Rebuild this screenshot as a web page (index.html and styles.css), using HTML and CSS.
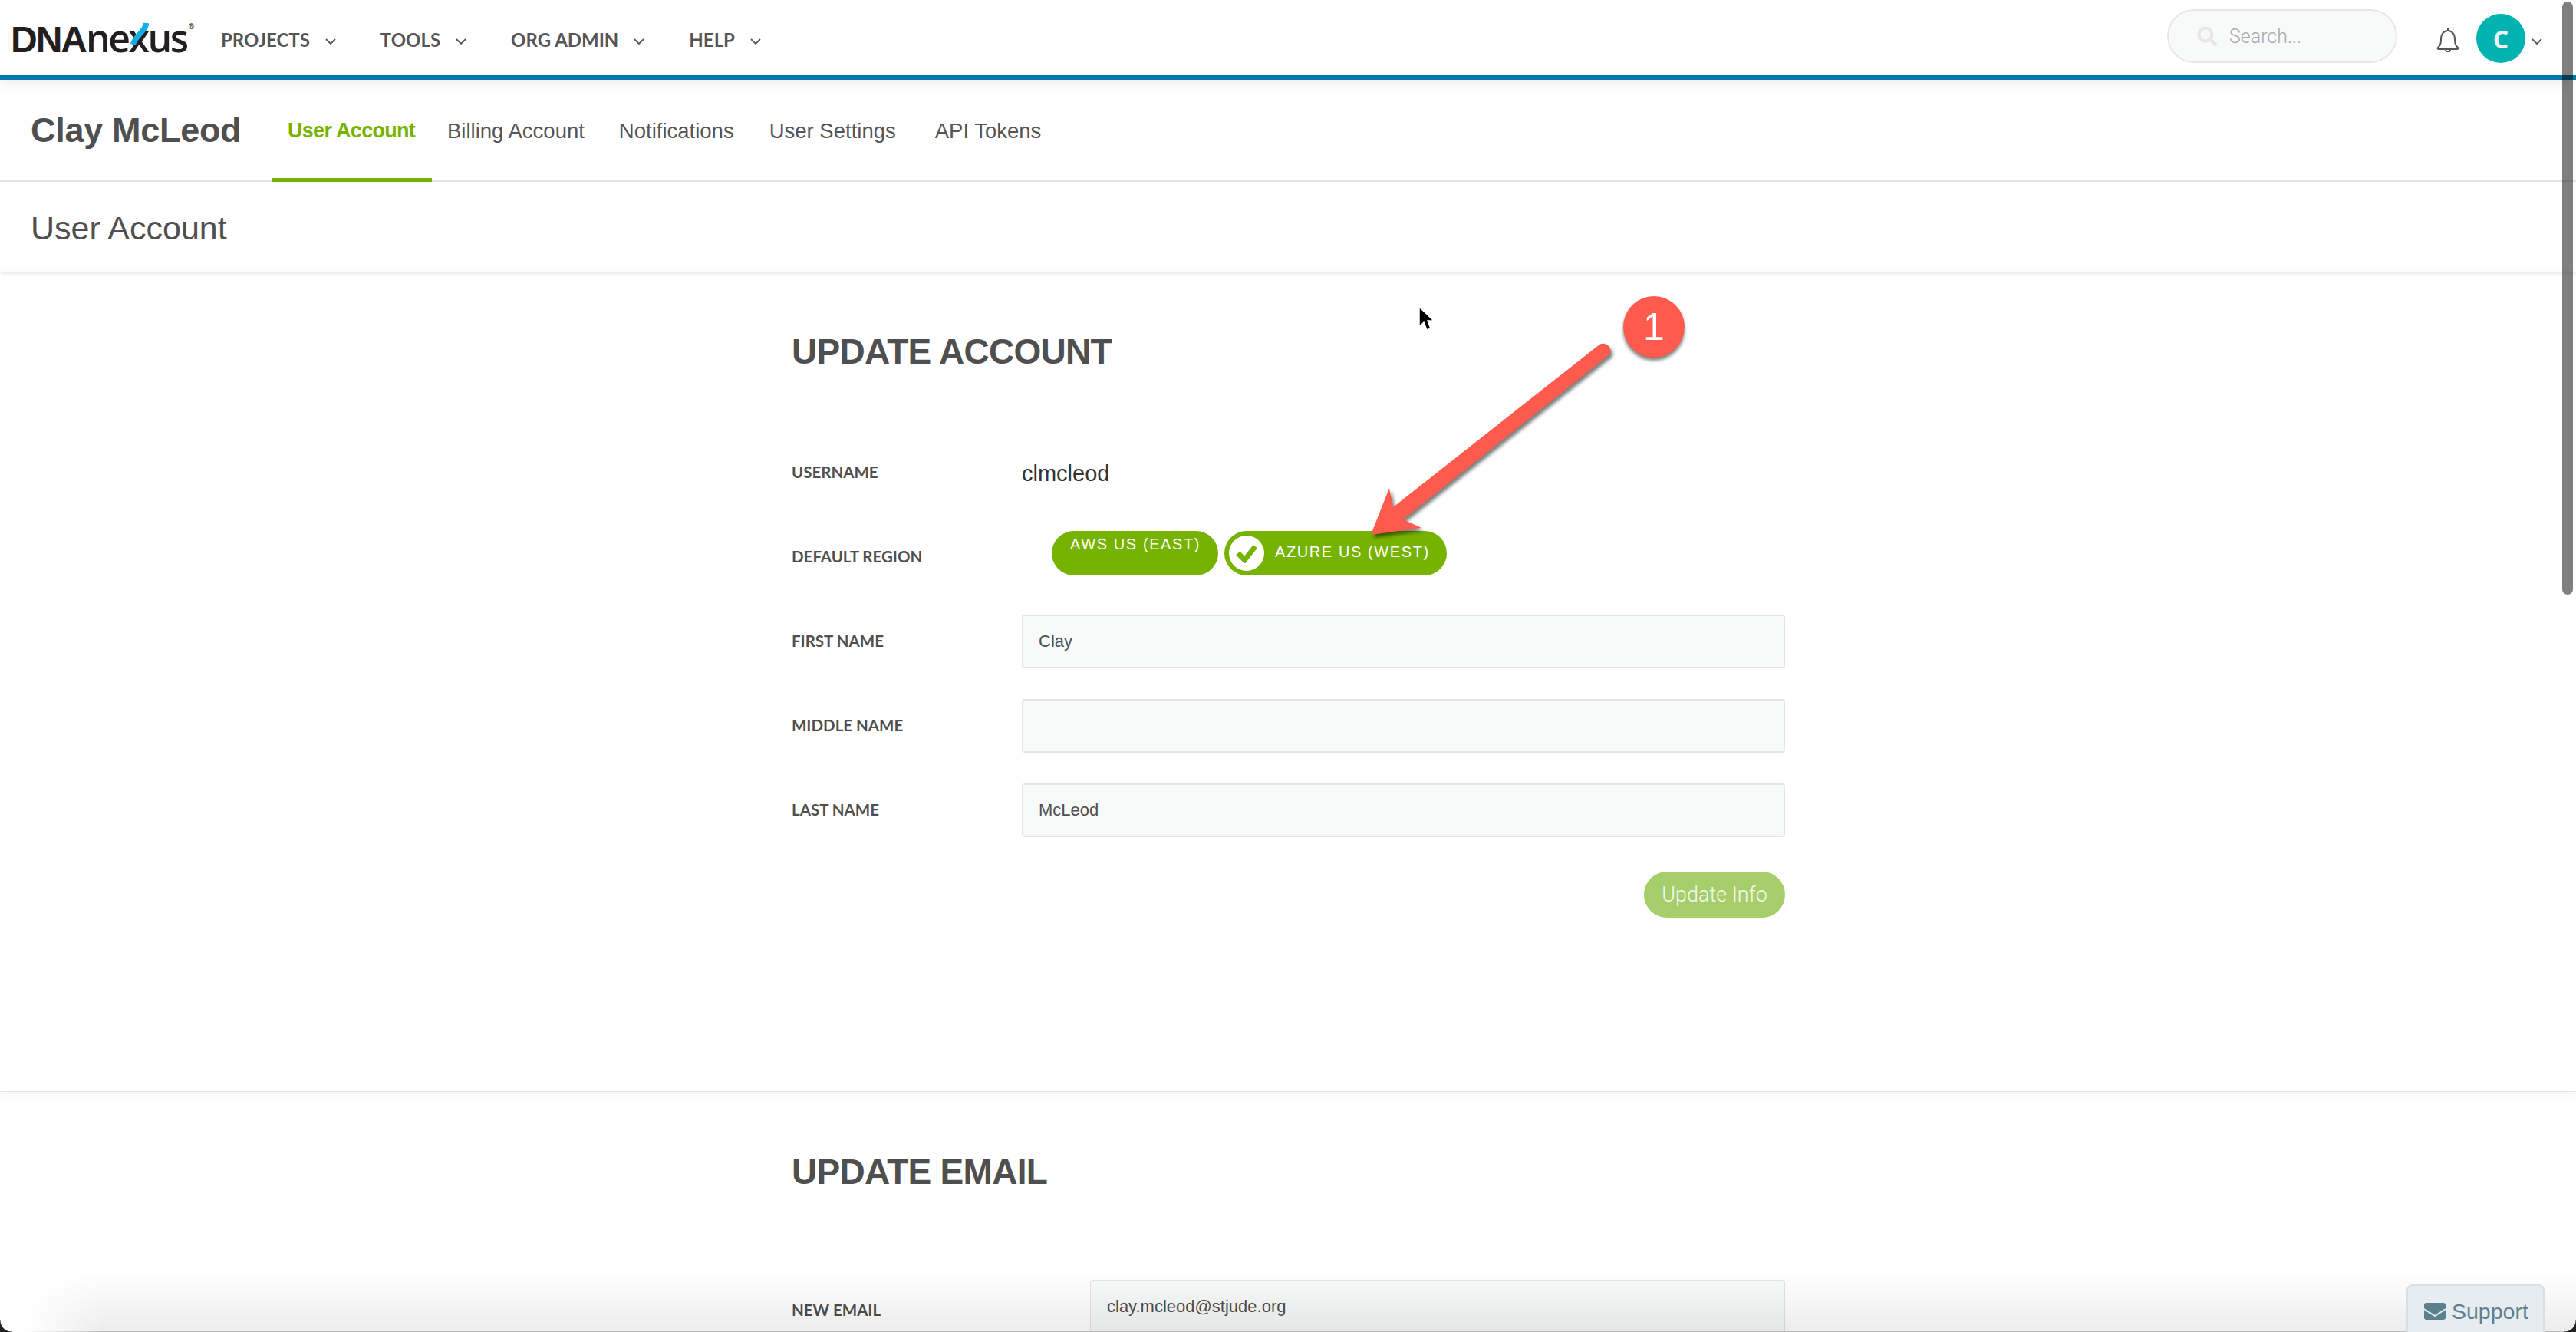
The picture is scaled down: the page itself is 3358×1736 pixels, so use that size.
FILE: index.html
```html
<!DOCTYPE html>
<html>
  <head>
    <meta name="viewport" content="width=device-width, initial-scale=1" />
    <title>User Account</title>
    <link rel="stylesheet" href="styles.css">
  </head>
  <body>
    <header class="topbar">
      <a class="logo">
        <span class="logo-dna">DNA</span><span class="logo-nexus">nexus</span><sup class="logo-reg">®</sup>
        <svg class="logo-strand" viewBox="0 0 24 30" preserveAspectRatio="none"><path d="M21 1C20 11 8 17 4 29" /></svg>
      </a>
      <nav class="mainnav">
        <a class="mainnav-item">PROJECTS<svg class="chev" viewBox="0 0 14 8"><path d="M1 1l6 6 6-6" /></svg></a>
        <a class="mainnav-item">TOOLS<svg class="chev" viewBox="0 0 14 8"><path d="M1 1l6 6 6-6" /></svg></a>
        <a class="mainnav-item">ORG ADMIN<svg class="chev" viewBox="0 0 14 8"><path d="M1 1l6 6 6-6" /></svg></a>
        <a class="mainnav-item">HELP<svg class="chev" viewBox="0 0 14 8"><path d="M1 1l6 6 6-6" /></svg></a>
      </nav>
      <div class="search">
        <svg class="search-icon" viewBox="0 0 26 26"><circle cx="11" cy="11" r="8.5" /><path d="M17 17l7 7" /></svg>
        <span class="search-text">Search...</span>
      </div>
      <svg class="bell" viewBox="0 0 30 32"><path d="M15 1v3M2 26c3-3 4-5 4-11 0-7 4-11 9-11s9 4 9 11c0 6 1 8 4 11 1 1 0 2-1 2H3c-1 0-2-1-1-2zM12 28c0 5 6 5 6 0" /></svg>
      <div class="avatar">C</div>
      <svg class="chev chev-user" viewBox="0 0 14 8"><path d="M1 1l6 6 6-6" /></svg>
    </header>

    <div class="subnav">
      <div class="subnav-name">Clay McLeod</div>
      <a class="tab tab-active">User Account</a>
      <a class="tab tab-billing">Billing Account</a>
      <a class="tab tab-notifications">Notifications</a>
      <a class="tab tab-settings">User Settings</a>
      <a class="tab tab-tokens">API Tokens</a>
    </div>

    <div class="pagetitle">User Account</div>

    <section class="section section-account">
      <h2 class="section-title">UPDATE ACCOUNT</h2>
      <div class="row row-first">
        <label class="row-label">USERNAME</label>
        <div class="username">clmcleod</div>
      </div>
      <div class="row">
        <label class="row-label">DEFAULT REGION</label>
        <div class="regions">
          <div class="region region-plain">AWS US (EAST)</div>
          <div class="region region-selected">
            <span class="region-check"><svg viewBox="0 0 24 20"><path d="M3 10l7 7L21 3" /></svg></span>
            AZURE US (WEST)
          </div>
        </div>
      </div>
      <div class="row">
        <label class="row-label">FIRST NAME</label>
        <input class="field" type="text" value="Clay" />
      </div>
      <div class="row">
        <label class="row-label">MIDDLE NAME</label>
        <input class="field" type="text" />
      </div>
      <div class="row">
        <label class="row-label">LAST NAME</label>
        <input class="field" type="text" value="McLeod" />
      </div>
      <div class="actions">
        <button class="update-btn" type="button">Update Info</button>
      </div>
    </section>

    <section class="section section-email">
      <h2 class="section-title">UPDATE EMAIL</h2>
      <div class="row row-email">
        <label class="row-label">NEW EMAIL</label>
        <input class="field field-email" type="text" value="clay.mcleod@stjude.org" />
      </div>
    </section>

    <!-- annotation drawn on top of the screenshot -->
    <svg class="arrow" viewBox="0 0 360 300">
      <path d="M7 277L31 216 36 241 305 29A9.5 9.5 0 0 1 318 42L49 257 73 268z" />
    </svg>
    <div class="marker">1</div>
    <svg class="cursor" viewBox="0 0 22 34"><path d="M2 1v26l6-6 4 10 5-2-4-10h8z" /></svg>

    <div class="bottom-fade"></div>
    <div class="support">
      <svg class="support-icon" viewBox="0 0 28 22"><path class="env-body" d="M3 0h22a3 3 0 0 1 3 3v16a3 3 0 0 1-3 3H3a3 3 0 0 1-3-3V3a3 3 0 0 1 3-3z" /><path class="env-flap" d="M0 8l14 9 14-9" /></svg>
      Support
    </div>
    <div class="scrollbar"></div>
    <div class="corner corner-left"></div>
    <div class="corner corner-right"></div>
  </body>
</html>
```

FILE: styles.css
```css
html,
body {
  margin: 0;
  height: 1736px;
  overflow: hidden;
  background: #fff;
  color: #4f4f4f;
  font-family: "Liberation Sans", Arial, sans-serif;
}

/* Top bar */
.topbar {
  display: flex;
  align-items: center;
  height: 98px;
  border-bottom: 6px solid #0078a8;
  box-shadow: 0 5px 14px rgba(0, 0, 0, 0.07);
  position: relative;
}

.logo {
  position: relative;
  display: flex;
  align-items: baseline;
  width: 288px;
  padding-left: 14px;
  box-sizing: border-box;
  color: #231f20;
  font-family: "Liberation Sans", Arial, sans-serif;
}

.logo-dna {
  font-size: 48px;
  font-weight: 700;
  letter-spacing: -2px;
}

.logo-nexus {
  font-family: "Open Sans", sans-serif;
  font-size: 50px;
  font-weight: 600;
  letter-spacing: -2.5px;
}

.logo-reg {
  font-size: 10px;
  align-self: flex-start;
  margin: 14px 0 0 2px;
}

.logo-strand {
  position: absolute;
  left: 169px;
  top: 14px;
  width: 25px;
  height: 30px;
}

.logo-strand path {
  fill: none;
  stroke: #14aee5;
  stroke-width: 7;
}

.mainnav {
  display: flex;
  margin-top: 4px;
  font-family: Lato, sans-serif;
  font-size: 24px;
  font-weight: 700;
  color: #555;
}

.mainnav-item {
  display: flex;
  align-items: center;
  margin-right: 58px;
}

.chev {
  width: 14px;
  height: 8px;
  margin-left: 20px;
  margin-top: 6px;
}

.chev path {
  fill: none;
  stroke: #555;
  stroke-width: 1.8;
}

.search {
  display: flex;
  align-items: center;
  box-sizing: border-box;
  width: 300px;
  height: 70px;
  margin-left: auto;
  margin-top: -4px;
  padding-left: 37px;
  background: #f8f9f9;
  border: 2px solid #e6e6e6;
  border-radius: 35px;
}

.search-icon {
  width: 26px;
  height: 26px;
}

.search-icon circle,
.search-icon path {
  fill: none;
  stroke: #e6e6e6;
  stroke-width: 4;
  stroke-linecap: round;
}

.search-text {
  margin-left: 16px;
  color: #aaa;
  font-family: Roboto, sans-serif;
  font-size: 25px;
  font-weight: 300;
}

.bell {
  width: 30px;
  height: 32px;
  margin-left: 51px;
  margin-top: 6px;
}

.bell path {
  fill: none;
  stroke: #555;
  stroke-width: 2;
}

.avatar {
  display: flex;
  align-items: center;
  justify-content: center;
  width: 64px;
  height: 64px;
  margin-left: 22px;
  margin-top: 2px;
  border-radius: 50%;
  background: #00b3b0;
  color: #f0f0f0;
  font-family: "Open Sans", sans-serif;
  font-size: 32px;
  font-weight: 700;
}

.chev-user {
  margin-left: 8px;
  margin-right: 44px;
  margin-top: 10px;
}

/* Sub navigation */
.subnav {
  display: flex;
  align-items: center;
  box-sizing: border-box;
  height: 133px;
  padding-left: 40px;
  border-bottom: 2px solid #e6e6e6;
}

.subnav-name {
  width: 315px;
  font-size: 45px;
  font-weight: 700;
  letter-spacing: -0.3px;
}

.tab {
  box-sizing: border-box;
  height: 133px;
  margin-top: 1px;
  padding-top: 51px;
  font-size: 27.5px;
  color: #555;
}

.tab-active {
  width: 208px;
  padding-left: 20px;
  color: #76b300;
  font-size: 27px;
  font-weight: 700;
  letter-spacing: -0.7px;
  border-bottom: 5px solid #76b300;
}

.tab-billing {
  margin-left: 20px;
}

.tab-notifications {
  margin-left: 45px;
}

.tab-settings {
  margin-left: 46px;
}

.tab-tokens {
  margin-left: 51px;
}

.pagetitle {
  box-sizing: border-box;
  height: 117px;
  padding: 36px 0 0 40px;
  font-size: 43px;
  line-height: 48px;
  box-shadow: 0 2px 5px rgba(0, 0, 0, 0.12);
  position: relative;
}

/* Form sections */
.section {
  padding-left: 1032px;
  width: 1295px;
}

.section-account {
  height: 1069px;
  width: auto;
  border-bottom: 1px solid #e2e2e2;
  box-shadow: 0 2px 10px rgba(0, 0, 0, 0.06);
  box-sizing: border-box;
  padding-right: 1031px;
}

.section-title {
  margin: 0;
  padding-top: 81px;
  font-size: 46px;
  line-height: 46px;
  font-weight: 700;
  letter-spacing: -0.7px;
}

.row {
  display: flex;
  align-items: center;
  height: 70px;
  margin-top: 40px;
}

.row-first {
  margin-top: 100px;
}

.row-label {
  flex: 0 0 300px;
  margin-top: -3px;
  font-family: Lato, sans-serif;
  font-size: 20.5px;
  font-weight: 700;
}

.username {
  margin-top: 2px;
  color: #333;
  font-size: 29px;
}

.regions {
  display: flex;
  margin-left: 39px;
  margin-top: -10px;
}

.region {
  box-sizing: border-box;
  height: 58px;
  border-radius: 29px;
  background: #76b200;
  color: #fff;
  font-size: 20px;
  letter-spacing: 1.6px;
}

.region-plain {
  width: 217px;
  padding: 3px 0 0 24px;
  line-height: 28px;
}

.region-selected {
  display: flex;
  align-items: center;
  width: 290px;
  margin-left: 8px;
  padding-left: 6px;
  padding-bottom: 4px;
}

.region-check {
  display: flex;
  align-items: center;
  justify-content: center;
  width: 46px;
  height: 46px;
  margin-top: 4px;
  margin-right: 14px;
  border-radius: 50%;
  background: #fff;
}

.region-check svg {
  width: 30px;
  height: 26px;
}

.region-check path {
  fill: none;
  stroke: #76b200;
  stroke-width: 5.5;
}

.field {
  box-sizing: border-box;
  flex: 0 0 995px;
  height: 70px;
  padding: 0 21px;
  background: #f8f9f9;
  border: 1px solid #e4e4e4;
  border-top-width: 2px;
  border-bottom-width: 2px;
  border-radius: 4px;
  color: #4f4f4f;
  font-family: "Liberation Sans", Arial, sans-serif;
  font-size: 22px;
}

.actions {
  display: flex;
  justify-content: flex-end;
  margin-top: 45px;
}

.update-btn {
  width: 184px;
  height: 60px;
  padding: 0;
  border: none;
  border-radius: 30px;
  background: #a6cf6c;
  color: #f4f9ec;
  font-family: Roboto, sans-serif;
  font-size: 27px;
  font-weight: 300;
}

.row-email {
  margin-top: 118px;
}

.row-email .row-label {
  flex-basis: 389px;
  margin-top: 8px;
}

.field-email {
  flex-basis: 906px;
}

/* Overlays */
.arrow {
  position: absolute;
  left: 1780px;
  top: 420px;
  width: 360px;
  height: 300px;
  filter: drop-shadow(3px 4px 2px rgba(0, 0, 0, 0.5));
}

.arrow path {
  fill: #fe5b4e;
}

.marker {
  position: absolute;
  left: 2116px;
  top: 386px;
  display: flex;
  align-items: center;
  justify-content: center;
  width: 80px;
  height: 80px;
  border-radius: 50%;
  background: #fe5b4e;
  color: #fff;
  font-size: 50px;
  box-shadow: 0 4px 4px rgba(0, 0, 0, 0.5);
}

.cursor {
  position: absolute;
  left: 1848px;
  top: 399px;
  width: 22px;
  height: 34px;
}

.cursor path {
  fill: #000;
  stroke: #fff;
  stroke-width: 1.5;
}

.bottom-fade {
  position: absolute;
  left: 30px;
  right: 0;
  top: 1660px;
  height: 75px;
  border-bottom: 1px solid #bbb;
  background: linear-gradient(rgba(0, 0, 0, 0), rgba(0, 0, 0, 0.075));
  -webkit-mask-image: linear-gradient(90deg, transparent, #000 105px);
  mask-image: linear-gradient(90deg, transparent, #000 105px);
}

.support {
  position: absolute;
  left: 3137px;
  top: 1674px;
  display: flex;
  align-items: center;
  box-sizing: border-box;
  width: 180px;
  height: 62px;
  padding: 6px 0 0 21px;
  background: #e6ecef;
  border: 2px solid #d5e0e4;
  border-bottom: none;
  border-radius: 8px 8px 0 0;
  color: #5d808f;
  font-size: 28.5px;
}

.support-icon {
  width: 28px;
  height: 22px;
  margin-right: 8px;
}

.env-body {
  fill: #5d808f;
}

.env-flap {
  fill: none;
  stroke: #e6ecef;
  stroke-width: 2;
}

.scrollbar {
  position: absolute;
  left: 3340px;
  top: 2px;
  width: 14px;
  height: 773px;
  border-radius: 7px;
  background: rgba(0, 0, 0, 0.5);
}

.corner {
  position: absolute;
  top: 1721px;
  width: 15px;
  height: 15px;
}

.corner-left {
  left: 0;
  background: radial-gradient(circle at 100% 0, transparent 14px, #222 15px);
}

.corner-right {
  right: 0;
  background: radial-gradient(circle at 0 0, transparent 14px, #222 15px);
}
```
